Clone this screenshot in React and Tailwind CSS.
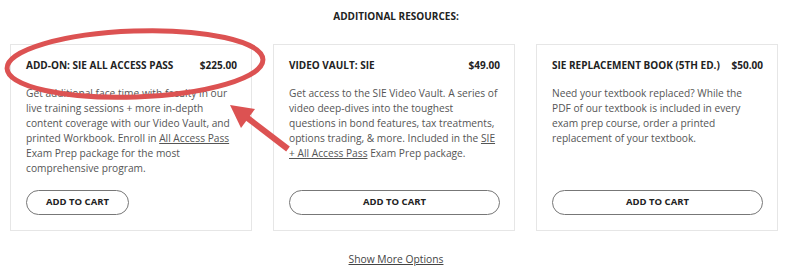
import React from 'react';

const resources = [
  {
    title: 'Add-On: SIE All Access Pass',
    price: '$225.00',
    body: (
      <>
        Get additional face time with faculty in our live training sessions + more in-depth content coverage with our Video Vault, and printed Workbook. Enroll in{' '}
        <a href="#" className="underline">All Access Pass</a> Exam Prep package for the most comprehensive program.
      </>
    ),
    fullButton: false,
  },
  {
    title: 'Video Vault: SIE',
    price: '$49.00',
    body: (
      <>
        Get access to the SIE Video Vault. A series of video deep-dives into the toughest questions in bond features, tax treatments, options trading, &amp; more. Included in the{' '}
        <a href="#" className="underline">SIE + All Access Pass</a> Exam Prep package.
      </>
    ),
    fullButton: true,
  },
  {
    title: 'SIE Replacement Book (5th Ed.)',
    price: '$50.00',
    body: (
      <>
        Need your textbook replaced? While the PDF of our textbook is included in every exam prep course, order a printed replacement of your textbook.
      </>
    ),
    fullButton: true,
  },
];

function ResourceCard({ item }) {
  return (
    <div className="flex h-[187px] flex-col border border-[#e6e6e6] bg-white pt-[13px] pr-[14px] pb-[15px] pl-[15px]">
      <div className="flex items-start justify-between gap-2 text-[10px] leading-[15px] font-bold uppercase text-[#222]">
        <span>{item.title}</span>
        <span>{item.price}</span>
      </div>
      <p className="mt-[13px] text-[10.2px] leading-[15px] text-[#555]">{item.body}</p>
      <div className="mt-auto">
        <button
          className={`h-[25px] rounded-full border border-[#777] bg-white text-[9.5px] font-bold uppercase text-[#222] ${
            item.fullButton ? 'w-full' : 'px-[19px]'
          }`}
        >
          Add to Cart
        </button>
      </div>
    </div>
  );
}

export default function App() {
  return (
    <div className="relative h-[276px] w-[792px] bg-white" style={{ fontFamily: '"Open Sans", "Liberation Sans", sans-serif' }}>
      <h2 className="pt-[9px] text-center text-[10px] leading-[15px] font-bold uppercase text-[#222]">
        Additional Resources:
      </h2>

      <div className="mt-[20px] ml-[10px] grid w-[768px] grid-cols-3 gap-[21px]">
        {resources.map((item) => (
          <ResourceCard key={item.title} item={item} />
        ))}
      </div>

      <div className="mt-[21px] text-center text-[10.3px] leading-[15px]">
        <a href="#" className="text-[#444] underline">
          Show More Options
        </a>
      </div>

      {/* red annotation overlay */}
      <svg className="pointer-events-none absolute top-0 left-0" width="792" height="276" viewBox="0 0 792 276">
        <ellipse cx="135" cy="64" rx="128" ry="33" fill="none" stroke="#dc5252" strokeWidth="5" transform="rotate(-2 135 64)" />
        <line x1="288" y1="149" x2="245" y2="116" stroke="#dc5252" strokeWidth="6" />
        <polygon points="230,105 255,109 241,128" fill="#dc5252" />
      </svg>
    </div>
  );
}
